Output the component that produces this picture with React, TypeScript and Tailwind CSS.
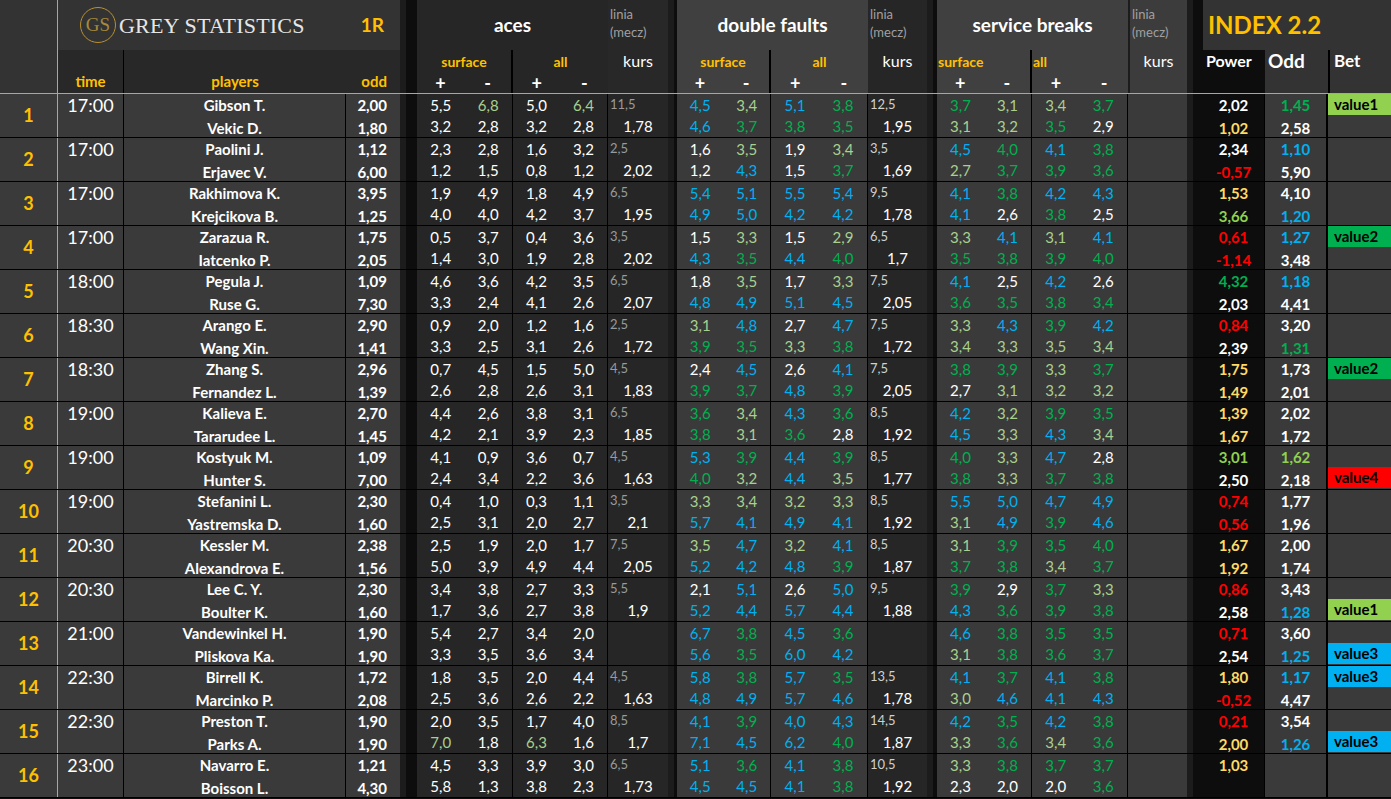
import React from "react";

const COLORS: Record<string, string> = {
  w: "text-white",
  l: "text-[#a9d08e]",
  g: "text-[#00b050]",
  b: "text-[#00b0f0]",
  y: "text-[#ffd966]",
  m: "text-[#92d050]",
  r: "text-[#ff0000]",
};

const BET: Record<string, string> = {
  value1: "bg-[#92d050]",
  value2: "bg-[#00b050]",
  value3: "bg-[#00b0f0]",
  value4: "bg-[#ff0000]",
};

type Match = {
  t: string;
  p: string[];
  o: string[];
  a: string[];
  al: string[];
  d: string[];
  dl: string[];
  s: string[];
  pw: string[];
  od: string[];
  bet: string[];
};

const MATCHES: Match[] = [
  { t: "17:00", p: ["Gibson T.", "Vekic D."], o: ["2,00", "1,80"], a: ["5,5 6,8l 5,0 6,4l", "3,2 2,8 3,2 2,8"], al: ["11,5", "1,78"], d: ["4,5b 3,4l 5,1b 3,8g", "4,6b 3,7g 3,8g 3,5g"], dl: ["12,5", "1,95"], s: ["3,7g 3,1l 3,4l 3,7g", "3,1l 3,2l 3,5g 2,9w"], pw: ["2,02w", "1,02y"], od: ["1,45g", "2,58w"], bet: ["value1", ""] },
  { t: "17:00", p: ["Paolini J.", "Erjavec V."], o: ["1,12", "6,00"], a: ["2,3 2,8 1,6 3,2", "1,2 1,5 0,8 1,2"], al: ["2,5", "2,02"], d: ["1,6w 3,5l 1,9w 3,4l", "1,2w 4,3b 1,5w 3,7g"], dl: ["3,5", "1,69"], s: ["4,5b 4,0g 4,1b 3,8g", "2,7l 3,7g 3,9g 3,6g"], pw: ["2,34w", "-0,57r"], od: ["1,10b", "5,90w"], bet: ["", ""] },
  { t: "17:00", p: ["Rakhimova K.", "Krejcikova B."], o: ["3,95", "1,25"], a: ["1,9 4,9 1,8 4,9", "4,0 4,0 4,2 3,7"], al: ["6,5", "1,95"], d: ["5,4b 5,1b 5,5b 5,4b", "4,9b 5,0b 4,2b 4,2b"], dl: ["9,5", "1,78"], s: ["4,1b 3,8g 4,2b 4,3b", "4,1b 2,6w 3,8g 2,5w"], pw: ["1,53y", "3,66m"], od: ["4,10w", "1,20b"], bet: ["", ""] },
  { t: "17:00", p: ["Zarazua R.", "Iatcenko P."], o: ["1,75", "2,05"], a: ["0,5 3,7 0,4 3,6", "1,4 3,0 1,9 2,8"], al: ["3,5", "2,02"], d: ["1,5w 3,3l 1,5w 2,9l", "4,3b 3,5g 4,4b 4,0g"], dl: ["6,5", "1,7"], s: ["3,3l 4,1b 3,1l 4,1b", "3,5g 3,8g 3,9g 4,0g"], pw: ["0,61r", "-1,14r"], od: ["1,27b", "3,48w"], bet: ["value2", ""] },
  { t: "18:00", p: ["Pegula J.", "Ruse G."], o: ["1,09", "7,30"], a: ["4,6 3,6 4,2 3,5", "3,3 2,4 4,1 2,6"], al: ["6,5", "2,07"], d: ["1,8w 3,5l 1,7w 3,3l", "4,8b 4,9b 5,1b 4,5b"], dl: ["7,5", "2,05"], s: ["4,1b 2,5w 4,2b 2,6w", "3,6g 3,5g 3,8g 3,4g"], pw: ["4,32g", "2,03w"], od: ["1,18b", "4,41w"], bet: ["", ""] },
  { t: "18:30", p: ["Arango E.", "Wang Xin."], o: ["2,90", "1,41"], a: ["0,9 2,0 1,2 1,6", "3,3 2,5 3,1 2,6"], al: ["2,5", "1,72"], d: ["3,1l 4,8b 2,7w 4,7b", "3,9g 3,5g 3,3l 3,8g"], dl: ["7,5", "1,72"], s: ["3,3l 4,3b 3,9g 4,2b", "3,4l 3,3l 3,5l 3,4l"], pw: ["0,84r", "2,39w"], od: ["3,20w", "1,31g"], bet: ["", ""] },
  { t: "18:30", p: ["Zhang S.", "Fernandez L."], o: ["2,96", "1,39"], a: ["0,7 4,5 1,5 5,0", "2,6 2,8 2,6 3,1"], al: ["4,5", "1,83"], d: ["2,4w 4,5b 2,6w 4,1b", "3,9g 3,7g 4,8b 3,9g"], dl: ["7,5", "2,05"], s: ["3,8g 3,9g 3,3l 3,7g", "2,7w 3,1l 3,2l 3,2l"], pw: ["1,75y", "1,49y"], od: ["1,73w", "2,01w"], bet: ["value2", ""] },
  { t: "19:00", p: ["Kalieva E.", "Tararudee L."], o: ["2,70", "1,45"], a: ["4,4 2,6 3,8 3,1", "4,2 2,1 3,9 2,3"], al: ["6,5", "1,85"], d: ["3,6g 3,4l 4,3b 3,6g", "3,8g 3,1l 3,6g 2,8w"], dl: ["8,5", "1,92"], s: ["4,2b 3,2l 3,9g 3,5g", "4,5b 3,3l 4,3b 3,4l"], pw: ["1,39y", "1,67y"], od: ["2,02w", "1,72w"], bet: ["", ""] },
  { t: "19:00", p: ["Kostyuk M.", "Hunter S."], o: ["1,09", "7,00"], a: ["4,1 0,9 3,6 0,7", "2,4 3,4 2,2 3,6"], al: ["4,5", "1,63"], d: ["5,3b 3,9g 4,4b 3,9g", "4,0g 3,2l 4,4b 3,5l"], dl: ["8,5", "1,77"], s: ["4,0g 3,3l 4,7b 2,8w", "3,8g 3,3l 3,7g 3,8g"], pw: ["3,01m", "2,50w"], od: ["1,62m", "2,18w"], bet: ["", "value4"] },
  { t: "19:00", p: ["Stefanini L.", "Yastremska D."], o: ["2,30", "1,60"], a: ["0,4 1,0 0,3 1,1", "2,5 3,1 2,0 2,7"], al: ["3,5", "2,1"], d: ["3,3l 3,4l 3,2l 3,3l", "5,7b 4,1b 4,9b 4,1b"], dl: ["8,5", "1,92"], s: ["5,5b 5,0b 4,7b 4,9b", "3,1l 4,9b 3,9g 4,6b"], pw: ["0,74r", "0,56r"], od: ["1,77w", "1,96w"], bet: ["", ""] },
  { t: "20:30", p: ["Kessler M.", "Alexandrova E."], o: ["2,38", "1,56"], a: ["2,5 1,9 2,0 1,7", "5,0 3,9 4,9 4,4"], al: ["7,5", "2,05"], d: ["3,5l 4,7b 3,2l 4,1b", "5,2b 4,2b 4,8b 3,9g"], dl: ["8,5", "1,87"], s: ["3,1l 3,9g 3,5g 4,0g", "3,7g 3,8g 3,4l 3,7g"], pw: ["1,67y", "1,92y"], od: ["2,00w", "1,74w"], bet: ["", ""] },
  { t: "20:30", p: ["Lee C. Y.", "Boulter K."], o: ["2,30", "1,60"], a: ["3,4 3,8 2,7 3,3", "1,7 3,6 2,7 3,8"], al: ["5,5", "1,9"], d: ["2,1w 5,1b 2,6w 5,0b", "5,2b 4,4b 5,7b 4,4b"], dl: ["9,5", "1,88"], s: ["3,9g 2,9w 3,7g 3,3l", "4,3b 3,6g 3,9g 3,8g"], pw: ["0,86r", "2,58w"], od: ["3,43w", "1,28b"], bet: ["", "value1"] },
  { t: "21:00", p: ["Vandewinkel H.", "Pliskova Ka."], o: ["1,90", "1,90"], a: ["5,4 2,7 3,4 2,0", "3,3 3,5 3,6 3,4"], al: ["", ""], d: ["6,7b 3,8g 4,5b 3,6g", "5,6b 3,5g 6,0b 4,2b"], dl: ["", ""], s: ["4,6b 3,8g 3,5g 3,5g", "3,1l 3,8g 3,6g 3,7g"], pw: ["0,71r", "2,54w"], od: ["3,60w", "1,25b"], bet: ["", "value3"] },
  { t: "22:30", p: ["Birrell K.", "Marcinko P."], o: ["1,72", "2,08"], a: ["1,8 3,5 2,0 4,4", "2,5 3,6 2,6 2,2"], al: ["4,5", "1,63"], d: ["5,8b 3,8g 5,7b 3,5g", "4,8b 4,9b 5,7b 4,6b"], dl: ["13,5", "1,78"], s: ["4,1b 3,7g 4,1b 3,8g", "3,0l 4,6b 4,1b 4,3b"], pw: ["1,80y", "-0,52r"], od: ["1,17b", "4,47w"], bet: ["value3", ""] },
  { t: "22:30", p: ["Preston T.", "Parks A."], o: ["1,90", "1,90"], a: ["2,0 3,5 1,7 4,0", "7,0l 1,8 6,3l 1,6"], al: ["8,5", "1,7"], d: ["4,1b 3,9g 4,0b 4,3b", "7,1b 4,5b 6,2b 4,0g"], dl: ["14,5", "1,87"], s: ["4,2b 3,5g 4,2b 3,8g", "3,3l 3,6g 3,4l 3,6g"], pw: ["0,21r", "2,00y"], od: ["3,54w", "1,26b"], bet: ["", "value3"] },
  { t: "23:00", p: ["Navarro E.", "Boisson L."], o: ["1,21", "4,30"], a: ["4,5 3,3 3,9 3,0", "5,8 1,3 3,8 2,3"], al: ["6,5", "1,73"], d: ["5,1b 3,6g 4,1b 3,8g", "4,5b 4,5b 4,1b 3,8g"], dl: ["10,5", "1,92"], s: ["3,3l 3,8g 3,7g 3,7g", "2,3w 2,0w 2,0w 3,6g"], pw: ["1,03y", ""], od: ["", ""], bet: ["", ""] },
];

function cell(tok: string) {
  const last = tok.slice(-1);
  if (/[a-z]/.test(last)) return { v: tok.slice(0, -1), c: COLORS[last] };
  return { v: tok, c: COLORS.w };
}

function Sep({ className }: { className: string }) {
  return <div className={`shrink-0 bg-[#0d0d0d] border-l-[6px] border-[#1c1c1c] ${className}`} />;
}

function Quad({ rows, from, className }: { rows: string[]; from: number; className: string }) {
  return (
    <div className={`shrink-0 grid grid-cols-2 grid-rows-2 ${className}`}>
      {rows.map((r, ri) =>
        r
          .split(" ")
          .slice(from, from + 2)
          .map((t, i) => {
            const x = cell(t);
            return (
              <span key={`${ri}-${i}`} className={`flex items-center justify-center text-[15px] ${x.c}`}>
                {x.v}
              </span>
            );
          })
      )}
    </div>
  );
}

function Linia({ vals, top, className }: { vals: string[]; top: string; className: string }) {
  return (
    <div className={`shrink-0 flex flex-col ${className}`}>
      <span className={`h-[21px] flex items-center pl-[2px] text-[13px] ${top}`}>{vals[0]}</span>
      <span className="flex-1 flex items-center justify-center text-[15px] text-white">{vals[1]}</span>
    </div>
  );
}

function Pair({ vals, className }: { vals: string[]; className: string }) {
  return (
    <div className={`shrink-0 flex flex-col font-bold text-[15px] ${className}`}>
      {vals.map((t, i) => {
        const x = cell(t);
        return (
          <span key={i} className={`flex-1 flex items-center justify-center ${x.c}`}>
            {x.v}
          </span>
        );
      })}
    </div>
  );
}

function SubHead({ label, left, className }: { label: string; left?: boolean; className: string }) {
  return (
    <div className={`shrink-0 flex flex-col ${className}`}>
      <span
        className={`h-[22px] shrink-0 flex items-center text-[14px] font-bold text-[#ffc000] ${left ? "pl-[1px]" : "justify-center"}`}
      >
        {label}
      </span>
      <div className="h-[21px] shrink-0 grid grid-cols-2 text-[18px] leading-none font-bold text-white">
        <span className="flex items-center justify-center">+</span>
        <span className="flex items-center justify-center">-</span>
      </div>
    </div>
  );
}

function LiniaHead({ className }: { className: string }) {
  return (
    <div className={`shrink-0 flex flex-col ${className}`}>
      <div className="h-[50px] shrink-0 pl-[2px] pt-[5px] text-[13px] leading-[18px] text-[#a0a0a0]">
        <div>linia</div>
        <div>(mecz)</div>
      </div>
      <span className="h-[22px] shrink-0 flex items-center justify-center text-[16px] text-white">kurs</span>
    </div>
  );
}

function Header() {
  return (
    <div className="flex h-[94px] border-b border-[#a6a6a6]">
      <div className="w-[58px] shrink-0 bg-[#333333] border-r border-[#a6a6a6]" />
      <div className="w-[342px] shrink-0 flex flex-col">
        <div className="h-[50px] shrink-0 bg-[#333333] flex items-center pl-[22px] pr-[16px]">
          <div className="w-[36px] h-[36px] rounded-full border-[1.5px] border-[#b8912f] flex items-center justify-center font-['Liberation_Serif',serif] text-[19px] text-[#a8893a]">
            GS
          </div>
          <span className="ml-[3px] font-['Liberation_Serif',serif] text-[22px] tracking-[0.2px] text-[#e6e6e6]">
            GREY STATISTICS
          </span>
          <span className="ml-auto text-[19px] font-bold text-[#ffc000]">1R</span>
        </div>
        <div className="flex-1 flex bg-[#282828] text-[15px] font-bold text-[#ffc000]">
          <span className="w-[66px] border-r border-black flex items-end justify-center pb-[1px]">time</span>
          <span className="w-[222px] flex items-end justify-center pb-[1px]">players</span>
          <span className="w-[54px] flex items-end justify-end pr-[13px] pb-[1px]">odd</span>
        </div>
      </div>
      <Sep className="w-[17px]" />
      <div className="w-[191px] shrink-0 flex flex-col bg-[#262626]">
        <span className="h-[50px] shrink-0 flex items-center justify-center text-[19px] font-bold text-white">aces</span>
        <div className="flex-1 flex">
          <SubHead label="surface" className="w-[96px] border-r-[2px] border-black" />
          <SubHead label="all" className="w-[95px]" />
        </div>
      </div>
      <LiniaHead className="w-[60px] bg-[#282828]" />
      <Sep className="w-[9px] border-l-0" />
      <div className="w-[191px] shrink-0 flex flex-col bg-[#404040]">
        <span className="h-[50px] shrink-0 flex items-center justify-center text-[19px] font-bold text-white">
          double faults
        </span>
        <div className="flex-1 flex">
          <SubHead label="surface" className="w-[94px] border-r-[2px] border-black" />
          <SubHead label="all" className="w-[97px]" />
        </div>
      </div>
      <LiniaHead className="w-[59px] bg-[#262626]" />
      <Sep className="w-[10px] border-l-0" />
      <div className="w-[191px] shrink-0 flex flex-col bg-[#404040]">
        <span className="h-[50px] shrink-0 flex items-center justify-center text-[19px] font-bold text-white">
          service breaks
        </span>
        <div className="flex-1 flex">
          <SubHead label="surface" left className="w-[95px] border-r-[2px] border-black" />
          <SubHead label="all" left className="w-[96px]" />
        </div>
      </div>
      <LiniaHead className="w-[59px] bg-[#3c3c3c] border-l-[2px] border-[#1c1c1c]" />
      <Sep className="w-[16px]" />
      <div className="w-[188px] shrink-0 flex flex-col">
        <div className="h-[50px] shrink-0 bg-[#333333] flex items-center pl-[5px] text-[24px] font-bold text-[#ffc000]">
          INDEX 2.2
        </div>
        <div className="flex-1 flex">
          <span className="w-[62px] bg-[#0d0d0d] pl-[3px] text-[16px] leading-[22px] font-bold text-white">Power</span>
          <span className="w-[63px] bg-[#333333] pl-[3px] text-[19px] leading-[22px] font-bold text-white">Odd</span>
          <span className="w-[63px] bg-[#333333] border-l-[2px] border-black pl-[4px] text-[17px] leading-[22px] font-bold text-white">
            Bet
          </span>
        </div>
      </div>
    </div>
  );
}

function Row({ m, n }: { m: Match; n: number }) {
  return (
    <div className="flex h-[44px] border-b border-black">
      <div className="w-[58px] shrink-0 bg-[#3a3a3a] border-r border-[#a6a6a6] flex items-center justify-center text-[18px] font-bold text-[#ffc000]">
        {n}
      </div>
      <div className="w-[66px] shrink-0 bg-[#3a3a3a] border-r border-black flex justify-center text-[18px] leading-[22px] text-white">
        {m.t}
      </div>
      <div className="w-[222px] shrink-0 bg-[#3a3a3a] border-r border-black flex flex-col text-[15px] font-bold text-white">
        {m.p.map((p) => (
          <span key={p} className="flex-1 flex items-center justify-center">
            {p}
          </span>
        ))}
      </div>
      <div className="w-[54px] shrink-0 bg-[#3a3a3a] flex flex-col text-[15px] font-bold text-white">
        {m.o.map((o, i) => (
          <span key={i} className="flex-1 flex items-center justify-end pr-[13px]">
            {o}
          </span>
        ))}
      </div>
      <Sep className="w-[17px]" />
      <Quad rows={m.a} from={0} className="w-[96px] bg-[#262626] border-r border-black" />
      <Quad rows={m.a} from={2} className="w-[95px] bg-[#262626] border-r border-black" />
      <Linia vals={m.al} top="text-[#9a9a9a]" className="w-[60px] bg-[#262626]" />
      <Sep className="w-[9px] border-l-0" />
      <Quad rows={m.d} from={0} className="w-[94px] bg-[#3a3a3a] border-r border-black" />
      <Quad rows={m.d} from={2} className="w-[97px] bg-[#3a3a3a] border-r border-black" />
      <Linia vals={m.dl} top="text-[#d0d0d0]" className="w-[59px] bg-[#262626]" />
      <Sep className="w-[10px] border-l-0" />
      <Quad rows={m.s} from={0} className="w-[95px] bg-[#3a3a3a] border-r border-black" />
      <Quad rows={m.s} from={2} className="w-[96px] bg-[#3a3a3a] border-r border-black" />
      <div className="w-[59px] shrink-0 bg-[#3a3a3a]" />
      <Sep className="w-[16px]" />
      <Pair vals={m.pw} className="w-[62px] bg-[#0d0d0d] border-r border-black" />
      <Pair vals={m.od} className="w-[63px] bg-[#3a3a3a] border-r-[2px] border-black" />
      <div className="w-[63px] shrink-0 bg-[#3a3a3a] flex flex-col">
        {m.bet.map((b, i) => (
          <span
            key={i}
            className={`h-[21px] flex items-center pl-[6px] text-[15px] font-bold text-black ${b ? BET[b] : ""}`}
          >
            {b}
          </span>
        ))}
      </div>
    </div>
  );
}

export default function App() {
  return (
    <div className="w-[1391px] h-[799px] overflow-hidden bg-[#0d0d0d] font-['Lato',sans-serif]">
      <Header />
      {MATCHES.map((m, i) => (
        <Row key={i} m={m} n={i + 1} />
      ))}
    </div>
  );
}
